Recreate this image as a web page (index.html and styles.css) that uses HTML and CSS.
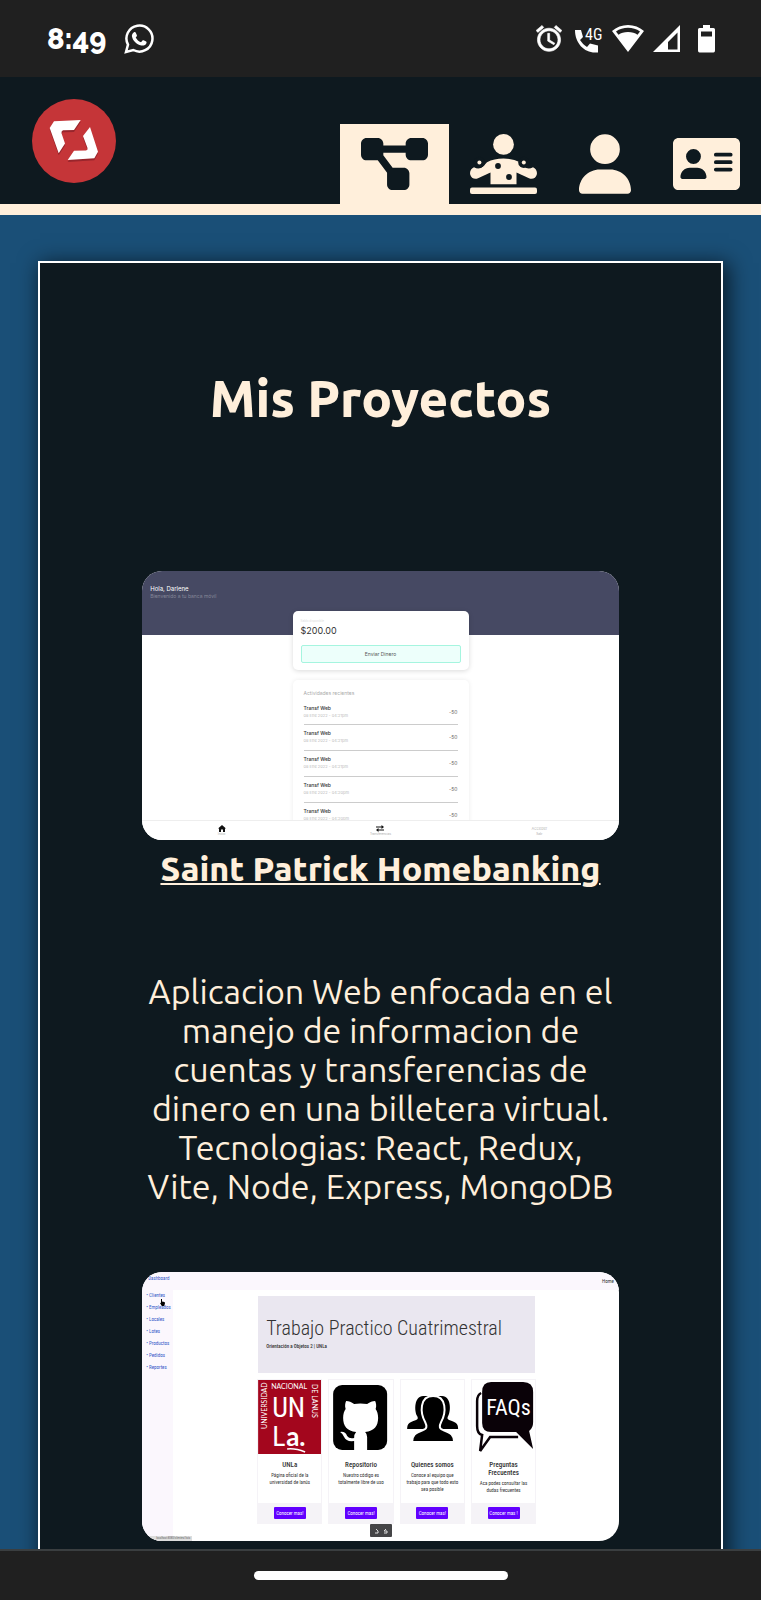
FILE: index.html
```html
<!DOCTYPE html>
<html lang="es">
<head>
<meta charset="utf-8">
<meta name="viewport" content="width=device-width, initial-scale=1">
<title>Mis Proyectos</title>
<link rel="stylesheet" href="styles.css">
</head>
<body>
<div class="statusbar">
  <div class="status-left">
    <span class="clock">8:49</span>
    <svg class="whatsapp" viewBox="0 0 30 30" aria-label="WhatsApp"><path d="M2 28l2-7.300A13 13 0 1 1 9.300 26z" fill="none" stroke="#fff" stroke-width="2.500"/><path d="M10 8.200c.8-.5 1.500-.2 1.800.5l1.100 2.600c.2.500 0 .9-1.200 2.200 1.300 2.300 2.900 3.900 5.300 4.800l1.500-1.800c.3-.4.7-.4 1.100-.2l2.500 1.200c.5.300.6.700.4 1.400-.6 2-3 3.100-5.200 2.600-5-1.200-8.600-4.800-9.400-9.200-.2-1.500.8-3.200 2.100-4.100z" fill="#fff"/></svg>
  </div>
  <div class="status-right">
    <svg class="s-alarm" viewBox="2 1.500 20 21"><path d="M22 5.720l-4.600-3.860-1.290 1.530 4.600 3.860L22 5.720zM7.880 3.390L6.600 1.860 2 5.710l1.290 1.530 4.590-3.850zM12.500 8H11v6l4.750 2.850.75-1.230-4-2.370V8zM12 4c-4.970 0-9 4.030-9 9s4.020 9 9 9c4.970 0 9-4.030 9-9s-4.030-9-9-9zm0 16c-3.870 0-7-3.130-7-7s3.130-7 7-7 7 3.130 7 7-3.130 7-7 7z" stroke="#fff" stroke-width=".5"/></svg>
    <svg class="s-phone" viewBox="0 0 30 28"><path d="M1 5h6l2 7-3 3c2 3 4 5 7 7l3-3.500 8 2v7h-3C10 27.500 1 18 1 5z"/><text x="11" y="15">4G</text></svg>
    <svg class="s-wifi" viewBox="0 0 32 28"><path fill-rule="evenodd" d="M16 0C10 0 4.500 2 0 6l16 21L32 6C27.500 2 22 0 16 0zm0 2.800c4.400 0 8.500 1.200 12 3.600l-2.500 3.400C23 7.800 20 7 16 7S9 7.800 6.500 9.800L4 6.400c3.500-2.400 7.600-3.600 12-3.600z"/></svg>
    <svg class="s-signal" viewBox="0 0 27 27"><path fill-rule="evenodd" d="M0 27L27 0v27zM24.500 7.500L15 17v7.500h9.500z"/></svg>
    <svg class="s-battery" viewBox="0 0 17 28"><path fill-rule="evenodd" d="M5 0h7v3h3.500Q17 3 17 4.500v21q0 2-1.500 2h-14Q0 27.500 0 25.500v-21Q0 3 1.500 3H5zM3 6.500v5h11v-5z"/></svg>
  </div>
</div>

<header class="header">
  <a class="logo" href="#inicio" aria-label="Inicio">
    <svg viewBox="0 0 84 84"><circle cx="42" cy="42" r="42" fill="#c53538"/><g fill="#7d1c25" opacity=".6" transform="translate(0 2)"><path d="M22 22.300L48.700 21 42 31l-11 .2q-2 .8-1.500 3L33 44.500l-6.300 9.800L17.700 29z"/><path d="M58 28l8 24.700-3.700 6.600L35.700 61 42 51.700l12-.2q2-.5 1.500-2.500L51 37z"/></g><g fill="#fff"><path d="M22 22.300L48.700 21 42 31l-11 .2q-2 .8-1.500 3L33 44.500l-6.300 9.800L17.700 29z"/><path d="M58 28l8 24.700-3.700 6.600L35.700 61 42 51.700l12-.2q2-.5 1.500-2.500L51 37z"/></g></svg>
  </a>
  <nav class="nav" aria-label="Secciones">
    <a class="tab active" href="#proyectos" aria-label="Proyectos"><svg viewBox="0 0 576 512"><path d="M0 80C0 53.500 21.500 32 48 32h96c26.500 0 48 21.500 48 48V96H384V80c0-26.500 21.500-48 48-48h96c26.500 0 48 21.500 48 48v96c0 26.500-21.500 48-48 48H432c-26.500 0-48-21.500-48-48V160H192v16c0 1.700-.1 3.400-.3 5L272 288h96c26.500 0 48 21.500 48 48v96c0 26.500-21.500 48-48 48H272c-26.500 0-48-21.500-48-48V336c0-1.700 .1-3.400 .3-5L144 224H48c-26.500 0-48-21.500-48-48V80z"/></svg></a>
    <a class="tab" href="#habilidades" aria-label="Habilidades"><svg viewBox="0 0 67 60"><circle cx="33.500" cy="10.400" r="10.400"/><rect y="53.500" width="67" height="6.500" rx="2"/><path d="M20.500 50.300V38.500L8 44.300C4.500 45.800 1 44 .2 40.500-.5 37 1.200 34.500 4 33.200Q9.500 36.500 14 31.500L17 28.200Q24 24.600 33.500 24.600T50 28.200l3 3.300q4.500 5 10 1.700c2.800 1.300 4.500 3.800 3.800 7.300-.8 3.500-4.300 5.300-7.800 3.800L46.500 38.500v11.800z"/><g class="hole"><circle cx="9.400" cy="28.400" r="5.600"/><circle cx="53.800" cy="28.400" r="5.600"/><circle cx="28" cy="32" r="2.900"/><circle cx="39" cy="43" r="2.900"/></g><circle cx="9.400" cy="28.400" r="2"/><circle cx="53.800" cy="28.400" r="2"/></svg></a>
    <a class="tab tab-user" href="#sobre-mi" aria-label="Sobre mí"><svg viewBox="0 0 448 512"><path d="M224 256A128 128 0 1 0 224 0a128 128 0 1 0 0 256zm-45.700 48C79.800 304 0 383.800 0 482.300C0 498.700 13.300 512 29.700 512H418.300c16.400 0 29.700-13.300 29.700-29.700C448 383.800 368.200 304 269.700 304H178.300z"/></svg></a>
    <a class="tab" href="#contacto" aria-label="Contacto"><svg viewBox="0 0 576 512"><path fill-rule="evenodd" d="M48 32C21 32 0 53 0 80V432c0 27 21 48 48 48H528c27 0 48-21 48-48V80c0-27-21-48-48-48zM144 288h64c44.200 0 80 35.800 80 80c0 8.800-7.200 16-16 16H80c-8.800 0-16-7.200-16-16c0-44.200 35.800-80 80-80zm-32-96a64 64 0 1 1 128 0 64 64 0 1 1-128 0zm256-32H496a16 16 0 0 1 0 32H368a16 16 0 0 1 0-32zm0 64H496a16 16 0 0 1 0 32H368a16 16 0 0 1 0-32zm0 64H496a16 16 0 0 1 0 32H368a16 16 0 0 1 0-32z"/></svg></a>
  </nav>
</header>

<main class="main">
  <section class="panel" id="proyectos">
    <h1>Mis Proyectos</h1>

    <article class="project">
      <div class="shot bank">
        <div class="bank-head"><p class="hello">Hola, Darlene</p><p class="welcome">Bienvenido a tu banca móvil</p></div>
        <div class="bank-body">
          <div class="balance"><p class="balance-label">Saldo disponible</p><p class="amount">$200.00</p><button class="send" type="button">Enviar Dinero</button></div>
          <div class="activity">
            <p class="activity-title">Actividades recientes</p>
            <ul>
              <li><div><b>Transf Web</b><small>08 Ene 2022 - 04:21pm</small></div><span>-50</span></li>
              <li><div><b>Transf Web</b><small>08 Ene 2022 - 04:21pm</small></div><span>-50</span></li>
              <li><div><b>Transf Web</b><small>08 Ene 2022 - 04:21pm</small></div><span>-50</span></li>
              <li><div><b>Transf Web</b><small>08 Ene 2022 - 04:20pm</small></div><span>-50</span></li>
              <li><div><b>Transf Web</b><small>08 Ene 2022 - 04:20pm</small></div><span>-50</span></li>
            </ul>
          </div>
        </div>
        <div class="bank-nav">
          <div><svg viewBox="0 0 8 7"><path d="M4 0l4 3.500H7V7H5V4.500H3V7H1V3.500H0z"/></svg><span>Inicio</span></div>
          <div><svg viewBox="0 0 8 7"><path d="M0 1.400h5.500V0L8 2 5.500 4V2.600H0zM8 4.400H2.500V3L0 5l2.500 2V5.600H8z"/></svg><span>Transferencias</span></div>
          <div><em>Acceder</em><span>Salir</span></div>
        </div>
      </div>
      <h2><a href="#saint-patrick">Saint Patrick Homebanking</a></h2>
      <p class="description">Aplicacion Web enfocada en el manejo de informacion de cuentas y transferencias de dinero en una billetera virtual. Tecnologias: React, Redux, Vite, Node, Express, MongoDB</p>
    </article>

    <article class="project">
      <div class="shot unla">
        <aside class="side">
          <p>Dashboard</p>
          <ul><li>Clientes</li><li>Empleados</li><li>Locales</li><li>Lotes</li><li>Productos</li><li>Pedidos</li><li>Reportes</li></ul>
          <svg class="cursor" viewBox="0 0 5 7"><path d="M1 0h1v2.500L4.500 3 5 4 4.300 7H1.800L0 4l1-.3z"/></svg>
          <span class="url">localhost:8080/clientes/lista</span>
        </aside>
        <div class="content">
          <div class="topbar">Home</div>
          <div class="inner">
            <div class="hero"><p class="hero-title">Trabajo Practico Cuatrimestral</p><p class="hero-sub">Orientación a Objetos 2 | UNLa</p></div>
            <div class="cards">
              <div class="card">
                <svg class="pic" viewBox="0 0 63 74"><rect width="63" height="74" fill="#a3061d"/><g fill="#fff"><text class="ring" x="13" y="9">NACIONAL</text><text class="ring" transform="translate(9 49) rotate(-90)">UNIVERSIDAD</text><text class="ring" transform="translate(54 4) rotate(90)">DE LANUS</text><text class="un" x="14" y="37">UN</text><text class="un" x="14" y="66">L</text><text class="a" x="28" y="66">a.</text></g><path d="M29 69q8-1 18 3" fill="none" stroke="#fff" stroke-width="1.500"/></svg>
                <div class="info"><b>UNLa</b><p>Página oficial de la universidad de lanús</p></div><div class="foot"><button type="button">Conocer mas!</button></div>
              </div>
              <div class="card">
                <svg class="pic" viewBox="0 0 63 74"><rect x="4" y="5" width="54" height="65" rx="9"/><path d="M25 70V61q-8 1-10-4-1-3-4-5 5-1 7 4 2 3 7 2 0-4 2-6c-9-1-13-6-13-14 0-4 1-7 2.500-9-1-3-.5-6 .5-8 3 0 5 1 8 3q6-1 13 0c3-2 5-3 8-3 1 2 1.500 5 .5 8 1.500 2 2.500 5 2.500 9 0 8-4 13-13 14q2 2 2 5v13z" fill="#fff"/></svg>
                <div class="info"><b>Repositorio</b><p>Nuestro código es totalmente libre de uso</p></div><div class="foot"><button type="button">Conocer mas!</button></div>
              </div>
              <div class="card">
                <svg class="pic" viewBox="0 0 63 74"><path d="M6 49c0-6 3-7 9-9 2-1 2-2 1-4-3-5-3-20 6-20h19c9 0 9 15 6 20-1 2-1 3 1 4 6 2 9 3 9 9z"/><path d="M11 62c0-7 3-9 11-12 4-1 4-4 2-8-5-9-6-26 8-26s13 17 8 26c-2 4-2 7 2 8 8 3 11 5 11 12z" stroke="#fff" stroke-width="2"/></svg>
                <div class="info"><b>Quienes somos</b><p>Conoce al equipo que trabajo para que todo esto sea posible</p></div><div class="foot"><button type="button">Conocer mas!</button></div>
              </div>
              <div class="card">
                <svg class="pic" viewBox="0 0 63 74"><path d="M9 13q-4 2-4 8v25q0 8 5 9L8 71l10-14h28" fill="none" stroke="#0a0208" stroke-width="2.500"/><path d="M19 2h32q10 0 10 10v30q0 6-4 9l4 18-17-17H19Q10 52 10 43V12Q10 2 19 2z" fill="#0a0208"/><text class="faq" x="14" y="35" fill="#fff">FAQs</text></svg>
                <div class="info"><b>Preguntas Frecuentes</b><p>Aca podes consultar las dudas frecuentes</p></div><div class="foot"><button type="button">Conocer mas !</button></div>
              </div>
            </div>
          </div>
        </div>
        <div class="tools"><svg viewBox="0 0 14 6"><g fill="none" stroke="#ddd"><path d="M1 5h3V3L2 1M10 5h3V3h-3l2-2"/></g></svg></div>
      </div>
    </article>
  </section>
</main>
<footer class="gesture"><span class="pill"></span></footer>
</body>
</html>
```
FILE: styles.css
```css
* { box-sizing: border-box; }
body, h1, h2, p, ul { margin: 0; padding: 0; }
ul { list-style: none; }
svg { display: block; }
body {
  display: flex;
  flex-direction: column;
  height: 100vh;
  overflow: hidden;
  background: #1a4f77;
  color: #ffefdb;
  font-family: Ubuntu, "Noto Sans", sans-serif;
}

/* System bars */
.statusbar {
  display: flex;
  flex: none;
  justify-content: space-between;
  align-items: center;
  height: 77px;
  padding: 0 46px 0 47px;
  background: #202020;
  color: #fff;
}
.status-left, .status-right { display: flex; align-items: center; }
.status-left { gap: 18px; }
.status-right { gap: 12px; fill: #fff; }
.clock { font: 800 29px/32px Raleway, Lato, sans-serif; font-variant-numeric: oldstyle-nums; }
.whatsapp { width: 30px; height: 30px; }
.s-alarm { width: 26px; height: 27px; }
.s-phone { width: 30px; height: 28px; overflow: visible; }
.s-phone text { font: 16px "Roboto Condensed", Roboto, sans-serif; }
.s-wifi { width: 32px; height: 28px; margin-left: -4px; }
.s-signal { width: 27px; height: 27px; margin-left: -3px; }
.s-battery { width: 17px; height: 28px; margin-left: 6px; }
.gesture {
  display: flex;
  flex: none;
  justify-content: center;
  align-items: center;
  height: 51px;
  background: #202020;
  border-top: 2px solid #3a3e40;
}
.pill { width: 254px; height: 9px; border-radius: 5px; background: #fff; }

/* Header */
.header {
  display: flex;
  flex: none;
  justify-content: space-between;
  align-items: flex-end;
  height: 138px;
  padding-left: 32px;
  background: #0e191f;
  border-bottom: 11px solid #ffefdb;
}
.logo { width: 84px; margin-bottom: 21px; }
.nav { display: flex; }
.tab { padding: 10px 21px; fill: #ffefdb; }
.tab svg { width: 67px; height: 60px; }
.tab-user svg { width: 52px; }
.tab.active { background: #ffefdb; fill: #0e191f; }
.hole { fill: #0e191f; }

/* Project panel */
.main { flex: 1; min-height: 0; padding: 46px 5% 0; overflow: hidden; }
.panel {
  min-height: 1400px;
  padding: 105px 0 60px;
  background: #0e191f;
  border: 2px solid #fff;
  box-shadow: 4px 4px 20px 2px rgba(0, 0, 0, .65);
  text-align: center;
}
.project { margin: 0 15%; }
h1 { margin-bottom: 143px; font-size: 51px; font-weight: 800; line-height: 60px; }
h2 { margin: 8px -20px 84px; font-size: 34px; font-weight: 800; line-height: 40px; }
h2 a { color: inherit; text-underline-offset: 2px; text-decoration-thickness: 2px; }
.description { margin-bottom: 66px; font-size: 34px; line-height: 39px; }
.shot {
  position: relative;
  display: flex;
  height: 269px;
  overflow: hidden;
  border-radius: 20px;
  background: #fff;
  color: #333;
  font-family: Roboto, sans-serif;
  text-align: left;
}

/* Homebanking preview */
.bank { flex-direction: column; font-family: Inter, sans-serif; }
.bank-head { flex: none; height: 64px; padding: 14px 8px; background: #464963; color: #fff; }
.hello { font-size: 6px; line-height: 8px; }
.welcome { color: #858798; font-size: 5px; line-height: 7px; }
.bank-body { flex: 1; min-height: 0; width: 176px; margin: -24px auto 0; }
.balance { height: 59px; padding: 8px; border-radius: 5px; background: #fff; box-shadow: 0 1px 5px rgba(0, 0, 0, .15); }
.balance-label { color: #ddd; font-size: 3px; line-height: 5px; }
.amount { font-size: 9px; line-height: 14px; }
.send { display: block; width: 100%; height: 18px; margin-top: 7px; padding: 0; border: 1px solid #a5f5df; border-radius: 2px; background: #edfffb; color: #555; font: 5px Inter, sans-serif; }
.activity { height: 150px; margin-top: 10px; padding: 9px 11px; border-radius: 5px; box-shadow: 0 0 5px rgba(0, 0, 0, .08); }
.activity-title { margin-bottom: 4px; color: #aaa; font-size: 5px; line-height: 8px; }
.activity li { display: flex; justify-content: space-between; align-items: center; height: 26px; padding-bottom: 2px; border-bottom: 1px solid #ccc; font-size: 5px; }
.activity li:first-child { height: 24px; }
.activity b, .activity small { display: block; line-height: 8px; }
.activity b { font-weight: 500; }
.activity small { color: #bbb; font-size: 4px; }
.activity span { color: #666; }
.bank-nav { z-index: 1; display: grid; flex: none; grid-template-columns: repeat(3, 1fr); height: 20px; padding-top: 4px; border-top: 1px solid #eee; background: #fff; text-align: center; }
.bank-nav svg { width: 8px; height: 7px; margin: 0 auto; fill: #111; }
.bank-nav span { display: block; color: #aaa; font-size: 3px; line-height: 5px; }
.bank-nav em { display: block; color: #bbb; font-size: 4px; font-style: normal; line-height: 7px; }

/* University dashboard preview */
.unla { font-family: "Roboto Condensed", Roboto, sans-serif; }
.side { flex: none; width: 31px; background: #fbf7fd; color: #3458c8; font-size: 5px; }
.side p { padding: 2px 0 0 6px; line-height: 8px; }
.side ul { margin-top: 7px; padding-left: 4px; }
.side li { line-height: 12px; }
.side li::before { content: "• "; }
.cursor { position: absolute; top: 27px; left: 18px; width: 5px; height: 7px; }
.url { position: absolute; bottom: 0; left: 0; padding: 0 2px 0 14px; background: #ddd; color: #666; font-size: 3px; line-height: 5px; }
.content { flex: 1; min-width: 0; }
.topbar { height: 18px; padding: 5px 5px 0; background: #fbf7fd; color: #333; font-size: 5px; line-height: 8px; text-align: right; }
.inner { width: 277px; margin: 6px 0 0 85px; }
.hero { height: 77px; padding: 18px 8px; background: #eae7f0; }
.hero-title { font-size: 20px; font-weight: 300; line-height: 28px; white-space: nowrap; }
.hero-sub { font-size: 5px; font-weight: 500; line-height: 8px; }
.cards { display: grid; grid-template-columns: repeat(4, 1fr); gap: 8px; margin-top: 7px; }
.card { display: flex; flex-direction: column; height: 143px; outline: 1px solid #f5f3f7; text-align: center; }
.pic { width: 100%; height: 74px; }
.ring { font: 7px Lato, sans-serif; }
.un { font: 28px "Roboto Condensed", Roboto, sans-serif; }
.a { font: bold 26px Lato, sans-serif; }
.faq { font: 22px "Roboto Condensed", Roboto, sans-serif; }
.info { flex: 1; padding-top: 7px; }
.info b { display: block; padding: 0 12px; font-size: 7px; font-weight: 500; line-height: 8px; }
.card:nth-child(2) b, .card:nth-child(3) b { padding: 0; }
.info p { margin: 3px 4px 0; font-size: 5px; line-height: 7px; }
.foot { display: flex; justify-content: center; align-items: center; height: 20px; background: #f5f3f7; }
.foot button { width: 32px; height: 12px; padding: 0; border: 0; border-radius: 1px; background: #6200ff; color: #fff; font: 5px "Roboto Condensed", Roboto, sans-serif; }
.tools { position: absolute; bottom: 4px; left: 228px; display: flex; justify-content: center; align-items: center; width: 22px; height: 13px; border-radius: 1px; background: #454547; }
.tools svg { width: 14px; height: 6px; }
```
